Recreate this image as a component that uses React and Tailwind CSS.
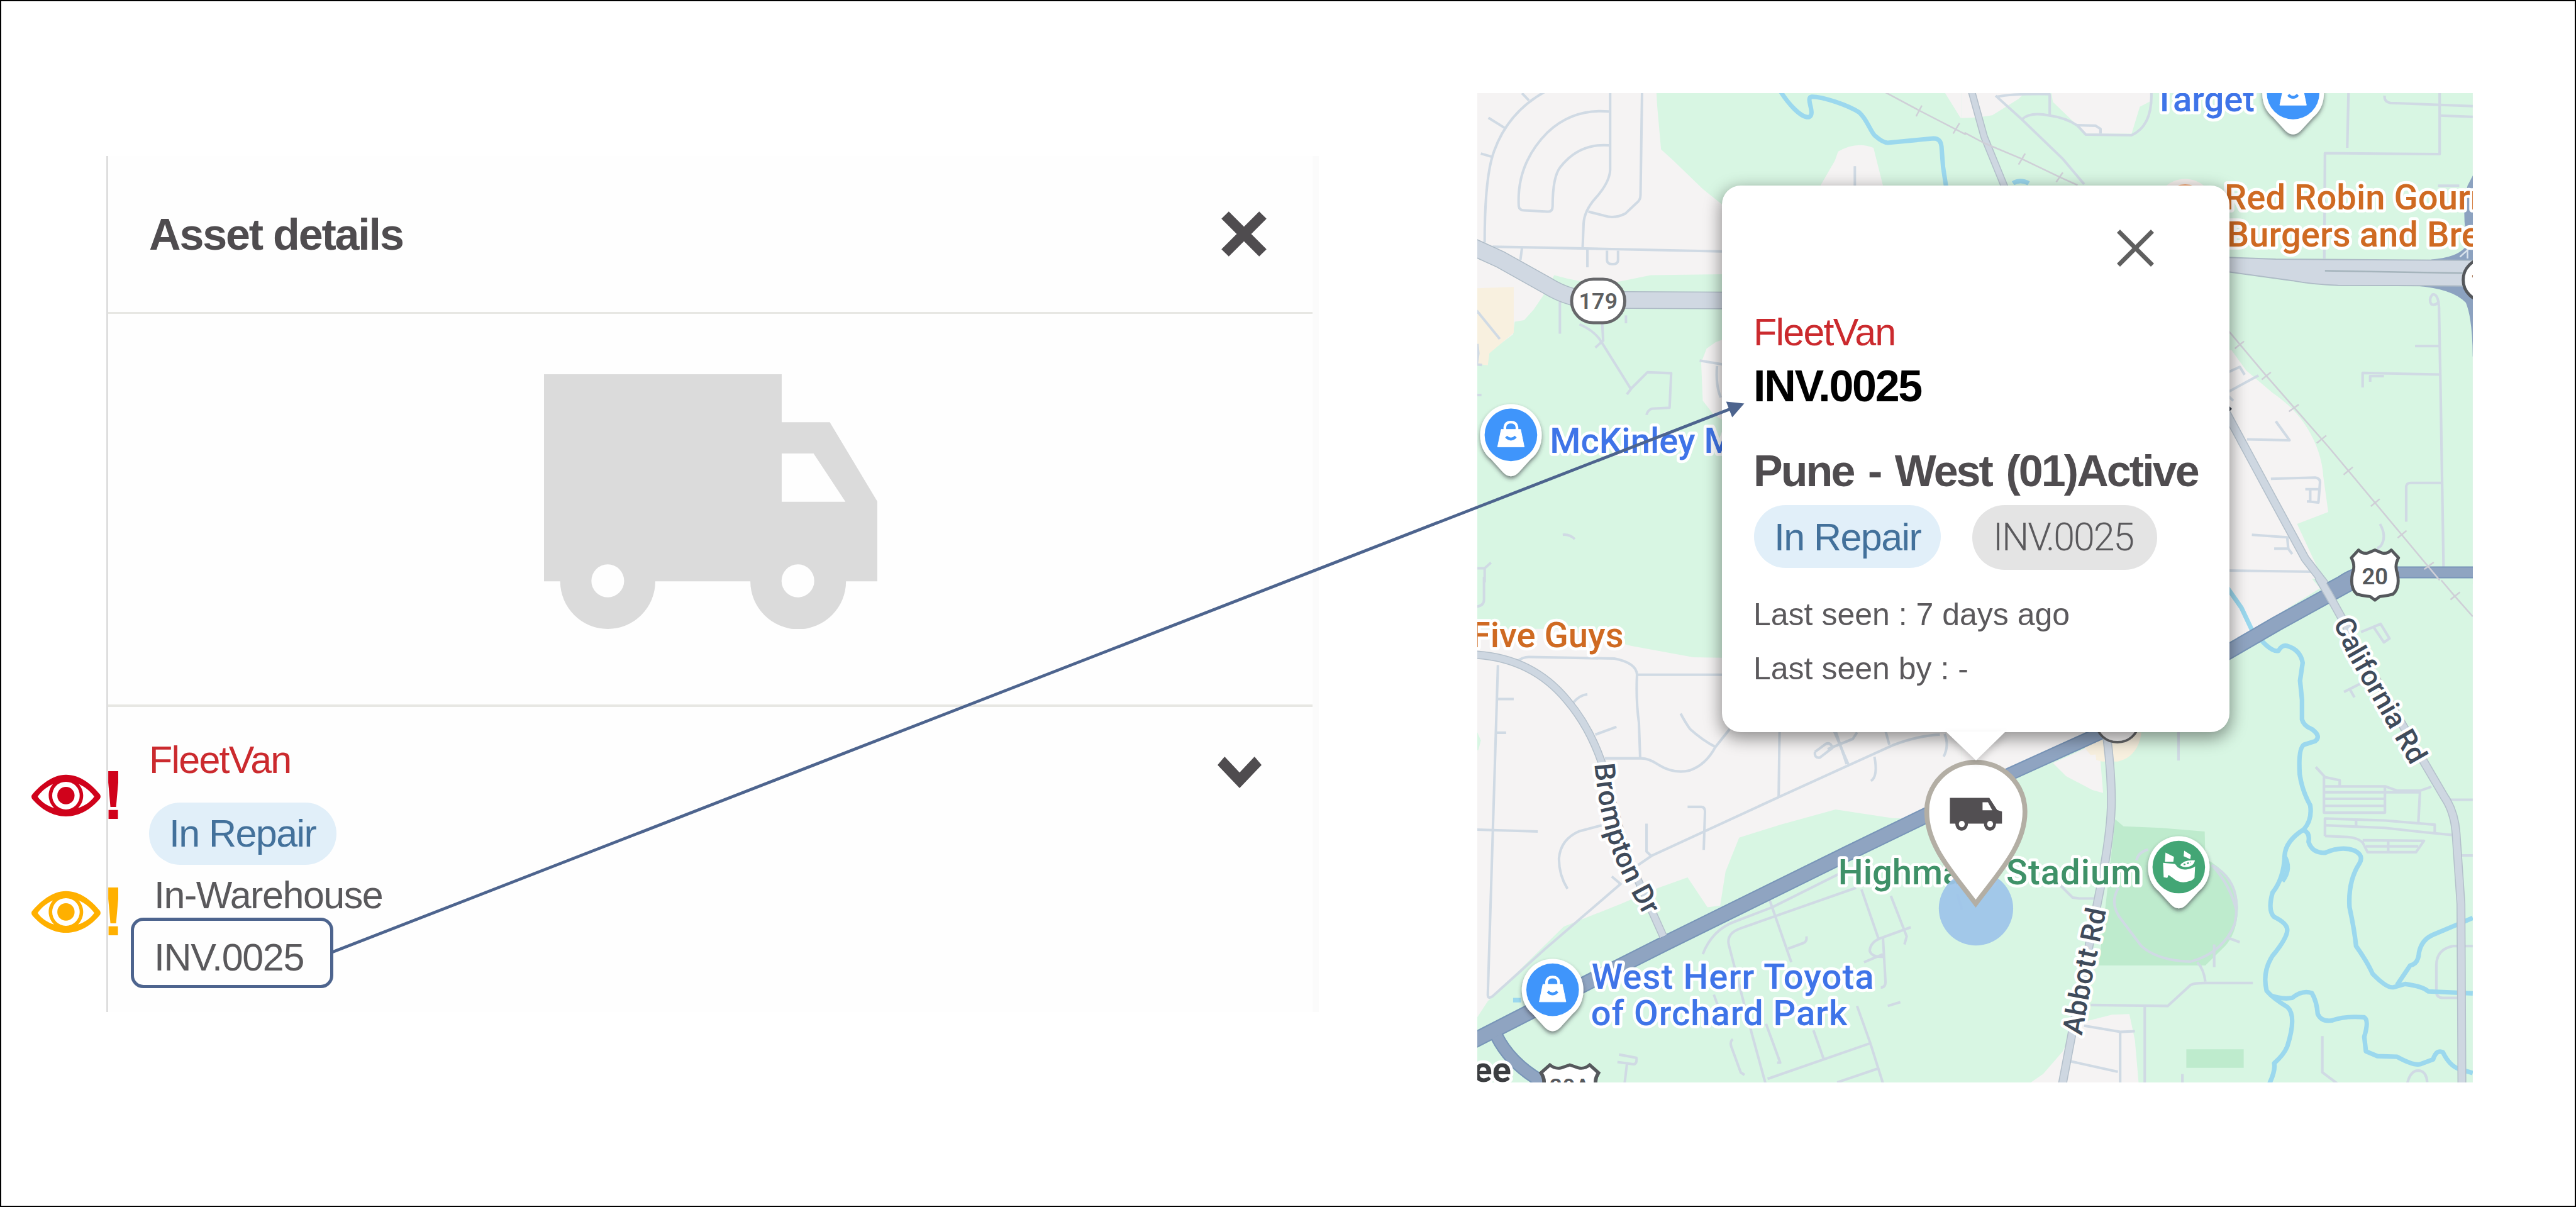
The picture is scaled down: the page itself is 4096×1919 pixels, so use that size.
import React from "react";

const TILES = {
  nw: "translate(2430 140) scale(0.523 0.523)",
  ne: "translate(3250 140) scale(0.5421 0.523)",
  sw: "translate(2430 960) scale(0.523 0.5357)",
  se: "translate(3250 960) scale(0.5421 0.5357)",
};

const LAND = [
  ["nw", "#d8f6e3", "M592 0L596 70L608 205L650 243L740 330L802 380H1600V0Z"],
  ["nw", "#f5f3f3", "M1112 320L1158 240L1168 212Q1225 178 1280 200L1310 320Z"],
  ["nw", "#f5f3f3", "M1490 0L1555 105L1572 105V0Z"],
  ["nw", "#d8f6e3", "M270 603Q400 640 480 622L575 603L802 600H1600V1600H0V900L40 850L60 850L140 790L145 750L175 745L205 712L240 660Z"],
  ["nw", "#f8f0df", "M0 645L142 640V785L65 850L60 888L27 884H0Z"],
  ["nw", "#f5f3f3", "M820 800L780 815L752 835L735 880L740 1000L775 1045L820 1070Z"],
  ["ne", "#d8f6e3", "M-10 0H1551V1580H-10Z"],
  ["ne", "#f5f3f3", "M-10 0H210L165 45L85 97Q40 105 -10 106Z"],
  ["ne", "#f5f3f3", "M260 0L270 55L330 115L370 155H510L535 70L572 50V0Z"],
  ["ne", "#f5f3f3", "M700 840H815L860 905L940 975Q1010 1025 1045 1085Q1090 1160 1095 1240L1110 1352L1015 1390L1100 1580H700Z"],
  ["sw", "#d8f6e3", "M0 -5H1600V240H830L710 238L515 203L300 150L0 150Z"],
  ["sw", "#d8f6e3", "M0 1390L60 1300L300 1070L480 1000L600 950L692 918L755 1010L795 1005L812 900L855 795L985 755L1160 708L1340 735L1600 740V1590H0Z"],
  ["sw", "#d8f6e3", "M0 470H27L38 495L30 525H0Z"],
  ["se", "#d8f6e3", "M-10 -5H1551V1590H-10Z"],
  ["se", "#f5f3f3", "M700 -5H1060L1085 25L870 160L790 200H700Z"],
  ["se", "#f5f3f3", "M-10 460H425L140 590L-10 665Z"],
  ["se", "#f5f3f3", "M270 565L410 500L423 657L390 648L310 605Z"],
  ["se", "#f8f0df", "M365 515L385 540L400 538L402 555L420 560H468Q530 545 540 470H415Z"],
  ["se", "#f5f3f3", "M190 1560L240 1525L300 1455L340 1370L450 1342L503 1340L520 1420L532 1560Z"],
  ["se", "#beebcd", "M460 738L485 760L600 765L733 776L735 860Q830 910 835 1010Q832 1090 795 1130L735 1190H410Z"],
  ["se", "#beebcd", "M677 1449H852V1506H677Z"],
];

const STREETS = {
  nw: [
    "M190 50L168 27", "M245 20Q125 85 80 210Q50 290 50 500", "M115 138L62 105", "M72 228L38 218",
    "M443 85Q330 75 250 150Q150 250 158 385Q160 398 175 398L250 402Q265 402 265 385Q265 290 290 260Q350 185 443 192",
    "M447 20V270Q445 310 400 360Q365 400 363 440L360 515",
    "M548 20L543 350Q543 365 530 375L495 408Q460 425 430 415L378 402",
    "M75 513L300 517L820 528", "M375 520V578", "M437 525V555Q437 568 455 568Q472 568 472 555V525", "M168 518L163 555",
    "M288 680V788", "M350 758Q400 780 420 815L512 962", "M422 757L425 810L400 832",
    "M500 980L515 960L565 910L640 913L635 1022L580 1025Q565 1030 562 1045", "M497 755V730",
    "M730 873L802 885H820", "M785 890Q780 950 797 990", "M25 715L98 805", "M27 820L30 850L25 885L42 887",
    "M297 1424Q320 1422 335 1438", "M27 1530H50L70 1512M50 1530V1575", "M1221 258V320", "M22 982H40",
  ],
  ne: [
    "M95 35L175 110L300 235L365 315", "M175 110Q200 85 260 98V30", "M100 38Q150 28 262 30",
    "M260 98Q310 105 345 130L370 158L510 160Q575 130 570 20", "M340 128L400 130L415 140V155",
    "M1172 20L1168 200", "M1282 35Q1280 55 1300 58L1551 68", "M1450 20V220L1100 217L1098 550", "M1450 98L1551 102",
    "M1445 320H1510", "M1448 703L1452 917L1462 1530", "M1448 703Q1445 660 1428 664Q1415 680 1425 695Q1440 700 1448 685",
    "M1375 827H1448", "M1215 958V912L1452 917", "M1238 940V922H1280", "M1348 1383V1270Q1350 1260 1362 1260H1455",
    "M1268 1390Q1290 1430 1270 1460L1262 1465V1482",
    "M800 912L840 893L855 918", "M800 975L897 920", "M800 980L820 1000",
    "M950 1065L992 1125L862 1122", "M935 1247L1070 1243Q1085 1245 1085 1258L1080 1322L1045 1318M1040 1280H1085M1055 1280V1318",
    "M877 1424L985 1432L988 1468L1000 1485M988 1468H945", "M800 1537L1060 1541",
  ],
  sw: [
    "M48 -10V60Q48 80 22 82", "M150 252Q170 237 190 237L460 242Q530 255 532 292H820M532 290Q528 370 538 440L542 550",
    "M430 550H545Q570 550 600 570Q650 600 700 587Q750 570 780 515L825 460", "M780 515Q740 495 700 460Q685 440 670 412",
    "M330 378Q350 355 375 352", "M400 477L467 453", "M92 262L60 1280Q60 1295 75 1285L240 1140L480 938L452 915",
    "M90 367H142", "M88 471H118", "M20 770L218 776", "M420 757L350 775Q290 800 285 860Q285 910 312 953",
    "M562 752V838L575 850", "M535 880L580 850L980 670L1205 570L1340 510Q1420 480 1490 477", "M983 460L980 670",
    "M692 700H735Q747 700 747 715L743 833", "M1160 465L1195 568", "M1155 465L1200 568",
    "M1095 530L1130 505Q1145 500 1150 518L1110 548Q1092 550 1095 530", "M1135 522L1215 490L1228 470",
    "M1318 465L1330 508", "M1283 545Q1295 605 1272 620", "M1505 475Q1520 510 1502 545",
    "M740 1155Q770 1080 840 1055L960 1010L1175 905", "M1225 950L860 1075Q815 1090 822 1125L895 1400L940 1560",
    "M945 970L1020 1180", "M1010 1138L1060 1120Q1070 1115 1068 1100", "M1242 955L1295 1105",
    "M1335 975L1385 1100L1378 1125", "M1398 1072L1310 1103Q1270 1115 1268 1145Q1275 1165 1310 1163",
    "M1310 1105L1318 1240Q1318 1258 1303 1258", "M1250 1180L1310 1155", "M1325 1315L1365 1303",
    "M1228 1315L1270 1430L1312 1560", "M945 1540L1270 1430", "M1165 1551L1295 1508", "M1090 1390L1122 1478",
    "M940 1370L985 1490H975", "M835 1418Q825 1425 830 1440L860 1520L872 1528", "M775 1280L790 1320",
    "M475 1465L530 1475Q533 1495 520 1495L470 1488M500 1495L492 1560", "M1545 970L1560 1018",
  ],
  se: [
    "M653 460V557", "M1210 160L1270 135L1297 180L1280 192L1250 147", "M1215 316L1158 345M1175 335L1190 362",
    "M1480 678H1551", "M1515 850H1551", "M1072 577L1100 608L1145 618V635M1097 608V718H1283V638",
    "M1100 637H1285L1320 650H1390L1425 638", "M1100 655H1390L1385 748", "M1100 675H1283", "M1100 697H1283",
    "M1100 790V736L1283 742L1435 755V780", "M1100 757L1283 765L1400 778L1500 788", "M1195 742V760",
    "M1100 790L1170 793Q1200 795 1215 810L1230 840H1378L1402 805L1215 803", "M1225 822H1385", "M1293 803V840",
    "M560 832Q530 840 525 865", "M470 950Q440 1000 480 1050L540 1130Q590 1175 690 1178Q790 1150 825 1060Q850 930 755 880",
    "M755 880Q810 940 830 1020", "M710 1180Q730 1200 735 1240", "M385 1312L620 1315L690 1250Q700 1244 735 1244H880",
    "M550 1315V1560", "M762 1125V1195", "M805 1105L840 1118", "M290 940L330 980L350 983H395",
    "M365 1376L475 1395L520 1393M475 1393V1560M315 1484L468 1518", "M665 1525V1560", "M1092 1408V1520L1145 1560",
    "M1350 1560Q1360 1510 1390 1515Q1410 1520 1412 1550",
    "M1551 1130H1490Q1440 1140 1440 1190V1270Q1440 1290 1460 1290H1510",
  ],
};

const WATER = {
  nw: ["M985 20C1010 60 1050 105 1075 103C1100 95 1062 40 1085 38C1120 38 1200 65 1235 88C1260 110 1270 148 1285 162Q1310 184 1325 184L1470 170Q1492 170 1495 195L1500 260L1510 325"],
  ne: ["M148 312Q170 298 196 312"],
  sw: ["M140 1297H165"],
  se: [
    "M800 20L845 85L880 160L920 200Q945 222 958 218Q970 198 985 203Q1025 215 1032 255L1024 310L1030 370V430Q1035 450 1060 460Q1090 482 1070 497L1036 508Q1018 520 1023 600Q1030 650 1055 695Q1062 740 1035 770Q980 805 977 850Q975 920 940 965Q925 1020 945 1040Q985 1060 985 1080Q985 1105 940 1160Q908 1210 922 1268Q940 1290 985 1318Q1015 1345 985 1440Q975 1465 945 1492Q950 1515 928 1560",
    "M975 850Q1000 890 970 930",
    "M1035 772Q1055 780 1050 808Q1060 842 1100 842Q1150 820 1190 835Q1220 850 1205 875Q1170 930 1175 1010Q1190 1080 1195 1130Q1230 1180 1245 1215Q1290 1262 1310 1257L1345 1247Q1400 1255 1415 1270L1551 1276",
    "M1320 1250L1360 1190Q1385 1185 1387 1150Q1395 1110 1430 1095L1500 1065L1551 1043",
    "M935 1283Q970 1295 1000 1290Q1030 1265 1060 1275Q1075 1300 1078 1340Q1090 1365 1120 1360Q1160 1345 1220 1350Q1235 1360 1220 1410L1225 1455L1260 1470L1320 1472Q1370 1500 1390 1495L1430 1480Q1440 1448 1460 1458Q1480 1500 1510 1510L1551 1522",
  ],
};

const RAIL = {
  nw: ["M1300 15L1425 82L1572 158", "M1415 100L1433 66", "M1532 155L1552 122"],
  ne: [
    "M0 152L60 185L175 235L290 292L345 318", "M165 253L185 218", "M280 308L300 278",
    "M800 772L920 920L1110 1145L1450 1568",
    "M825 835L853 812", "M907 933L935 910", "M990 1034L1020 1012", "M1075 1134L1104 1110",
    "M1157 1234L1185 1210", "M1240 1334L1267 1311", "M1322 1434L1349 1411", "M1403 1533L1432 1511",
  ],
  sw: [],
  se: ["M1455 0L1495 48L1551 112", "M1483 60L1512 37"],
};

const GREY_ROADS = [
  ["ne", 20, "M20 15L60 165L125 330"],
  ["ne", 24, "M800 1040L930 1290L1040 1500L1100 1580"],
  ["se", 24, "M1080 -10L1112 45L1230 260L1410 575L1465 670Q1495 715 1500 780L1515 1000L1518 1560"],
  ["se", 24, "M432 465Q450 600 448 700Q445 800 405 1000L330 1390L298 1560"],
  ["sw", 23, "M20 230Q200 240 310 370Q380 450 420 562L500 850L615 1100"],
];

const BLUE_ROADS = [
  ["ne", 34, "M1100 1600L1150 1572Q1190 1543 1225 1543H1560"],
  ["se", 44, "M780 236L950 136L1190 2"],
  ["se", 38, "M-90 706L140 598L430 465L520 420"],
  ["sw", 45, "M1540 682L1200 843L620 1122L330 1265L0 1430"],
  ["sw", 38, "M88 1408Q130 1490 225 1545L260 1570"],
];

function Layer({ paths, stroke, width }) {
  return Object.keys(TILES).map((key) => (
    <g key={key} transform={TILES[key]} fill="none" stroke={stroke} strokeWidth={width} strokeLinejoin="round">
      {paths[key].map((d, i) => (
        <path key={i} d={d} />
      ))}
    </g>
  ));
}

function CasedRoads({ roads, edge, fill, gap }) {
  return (
    <g fill="none">
      {roads.map(([tile, w, d], i) => (
        <path key={"e" + i} transform={TILES[tile]} d={d} stroke={edge} strokeWidth={w + gap} />
      ))}
      {roads.map(([tile, w, d], i) => (
        <path key={"f" + i} transform={TILES[tile]} d={d} stroke={fill} strokeWidth={w - gap} />
      ))}
    </g>
  );
}

function Label({ children, fill = "#3f74e8", size = 58.5, weight = 500, halo = 10, ...rest }) {
  return (
    <text
      fill={fill}
      fontSize={size}
      fontWeight={weight}
      stroke="#ffffff"
      strokeWidth={halo}
      strokeLinejoin="round"
      paintOrder="stroke"
      {...rest}
    >
      {children}
    </text>
  );
}

function Pin({ x, y, color, children }) {
  return (
    <g transform={`translate(${x} ${y})`}>
      <g filter="url(#pinShadow)">
        <path d="M0 -51A51 51 0 0 1 51 0C51 18 44 31 33 40L13 62Q0 75 -13 62L-33 40C-44 31 -51 18 -51 0A51 51 0 0 1 0 -51Z" fill="#fff" />
      </g>
      <circle r="43.5" fill={color} />
      {children}
    </g>
  );
}

function ShoppingPin({ x, y }) {
  return (
    <Pin x={x} y={y} color="#3f95fb">
      <path d="M-10 -8V-13Q-9 -21 0 -21Q9 -21 10 -13V-8" fill="none" stroke="#fff" strokeWidth="4.5" />
      <path d="M-16 -9H16L22 20H-22Z" fill="#fff" stroke="#fff" strokeWidth="1" />
      <path d="M-8 3Q0 11 8 3" fill="none" stroke="#3f95fb" strokeWidth="4.5" />
    </Pin>
  );
}

function Shield({ x, y, children }) {
  return (
    <g transform={`translate(${x} ${y})`}>
      <path
        d="M-27 -44Q-20 -37 -12 -39L0 -44L12 -39Q20 -37 27 -44L39 -31Q32 -18 37 -6Q42 18 30 29Q20 32 8 33L0 39L-8 33Q-20 32 -30 29Q-42 18 -37 -6Q-32 -18 -39 -31Z"
        fill="#fff"
        stroke="#55585c"
        strokeWidth="5"
        strokeLinejoin="round"
      />
      {children}
    </g>
  );
}

function MapCanvas() {
  return (
    <svg className="block h-full w-full font-['Roboto',sans-serif]" viewBox="2444 154 1647 1637" preserveAspectRatio="none">
      <defs>
        <filter id="pinShadow" x="-30%" y="-30%" width="160%" height="170%">
          <feDropShadow dx="0" dy="4" stdDeviation="3.5" floodColor="#30353a" floodOpacity="0.6" />
        </filter>
        <path id="brompton" d="M2638 1264C2643 1325 2654 1372 2668 1410S2704 1486 2732 1538" />
        <path id="california" d="M3860 1030L3884 1085L3996 1280" />
        <path id="abbott" d="M3444 1714L3463 1610L3488 1490" />
      </defs>
      <rect x="2440" y="150" width="1660" height="1650" fill="#f5f3f3" />
      {LAND.map(([tile, fill, d], i) => (
        <path key={i} transform={TILES[tile]} d={d} fill={fill} />
      ))}
      <Layer paths={STREETS} stroke="#d0dae4" width={8} />
      <Layer paths={WATER} stroke="#9bd8ee" width={14} />

      {/* Southwestern Blvd / Route 179 */}
      <g transform={TILES.nw} fill="none">
        <path d="M10 512L100 553L250 637Q320 680 400 681L820 683" stroke="#aebbc6" strokeWidth="56" />
        <path d="M10 512L100 553L250 637Q320 680 400 681L820 683" stroke="#d0d8e2" strokeWidth="50" />
      </g>
      <g transform={TILES.ne}>
        <path d="M1425 553Q1500 548 1528 515V460Q1520 380 1535 320L1560 270V860H1551Q1550 740 1530 690Q1490 645 1375 636Z" fill="#8ca2c0" />
        <path d="M790 546L950 552L1551 556V637L1140 635Q1060 632 1000 620L790 590Z" fill="#d0d8e2" stroke="#aebbc6" strokeWidth="4" />
        <path d="M1100 589L1551 597" stroke="#a5b4bc" strokeWidth="5" />
        <path d="M1512 545L1560 500M1535 550V500" stroke="#d8e2ec" strokeWidth="5" fill="none" />
      </g>

      <CasedRoads roads={BLUE_ROADS} edge="#7895b8" fill="#8fa4c1" gap={4} />
      <CasedRoads roads={GREY_ROADS} edge="#b4c0cb" fill="#ced7e1" gap={3} />
      <Layer paths={RAIL} stroke="#cfcfd7" width={5} />

      {/* Route badges */}
      <rect x="2600" y="462" width="88" height="72" rx="36" fill="#fff" stroke="#66676a" strokeWidth="5" />
      <text x="2644" y="511" fontSize="37" fontWeight="600" fill="#5d5f61" textAnchor="middle" textLength="64">179</text>
      <rect x="4075" y="428" width="90" height="70" rx="35" fill="#fff" stroke="#55585c" strokeWidth="5" />
      <text x="4087" y="478" fontSize="37" fontWeight="600" fill="#5d5f61">179</text>
      <Shield x={3929} y={954}>
        <text y="13" fontSize="38" fontWeight="600" fill="#55585c" textAnchor="middle">20</text>
      </Shield>
      <g transform="translate(2597 1806) scale(1.22 1)">
        <path
          d="M-27 -44Q-20 -37 -12 -39L0 -44L12 -39Q20 -37 27 -44L39 -31Q32 -18 37 -6V10H-37V-6Q-32 -18 -39 -31Z"
          fill="#fff"
          stroke="#55585c"
          strokeWidth="5"
        />
      </g>
      <text x="2597" y="1811" fontSize="37" fontWeight="600" fill="#55585c" textAnchor="middle">20A</text>
      <ellipse cx="3503" cy="1198" rx="34" ry="30" fill="#f5f3f3" stroke="#66676a" strokeWidth="4" />

      {/* Place labels */}
      <Label x="3563" y="184" textLength="167">Target</Label>
      <Label x="2564" y="749.5">McKinley Mall</Label>
      <Label x="3680" y="346.6" fill="#cf6a22">Red Robin Gourmet</Label>
      <Label x="3684" y="407.8" fill="#cf6a22">Burgers and Brews</Label>
      <Label x="2686" y="1070.5" textAnchor="end" fill="#cf6a22">Five Guys</Label>
      <Label x="2633" y="1636" textLength="467">West Herr Toyota</Label>
      <Label x="2632" y="1696.5" textLength="424">of Orchard Park</Label>
      <Label x="3041" y="1463.5" fill="#3f9168">Highmark</Label>
      <Label x="3319" y="1463.5" fill="#3f9168" textLength="224">Stadium</Label>
      <Label x="2500" y="1790" fill="#3b3d40" weight={700} size={58} textAnchor="end">ee</Label>
      <path d="M3680 684L3690 674" stroke="#2f3a46" strokeWidth="7" />

      <Label fill="#3f4b5b" size={47}>
        <textPath href="#brompton" textLength="268">Brompton Dr</textPath>
      </Label>
      <Label fill="#3f4b5b" size={47}>
        <textPath href="#california" textLength="270">California Rd</textPath>
      </Label>
      <Label fill="#3f4b5b" size={47}>
        <textPath href="#abbott" textLength="212">Abbott Rd</textPath>
      </Label>

      <circle cx="3269" cy="1503" r="61.5" fill="#9dc4ea" fillOpacity="0.93" />

      <ShoppingPin x={2499.6} y={719.5} />
      <ShoppingPin x={2568.6} y={1637.6} />
      <ShoppingPin x={3793.6} y={154} />
      <g>
        <circle cx="3615" cy="345" r="49" fill="#f5efec" />
        <circle cx="3615" cy="345" r="40" fill="#f3a06a" />
      </g>
      <Pin x={3604.5} y={1434.6} color="#43a675">
        <path d="M-22 -24L-8 -17L-9 -9L-23 -9ZM9 -27L20 -20L19 -13L8 -18Z" fill="#fff" />
        <path d="M-26 -7L-6 -5Q0 5 12 4Q22 3 27 -1L26 18Q22 23 18 23Q2 29 -10 18L-17 13L-19 18L-25 17Z" fill="#fff" />
        <path d="M1 -3Q8 -14 28 -12Q26 1 11 1Q4 1 1 -3Z" fill="#fff" stroke="#43a675" strokeWidth="2" />
        <path d="M8 -4L20 -8" stroke="#43a675" strokeWidth="2.5" strokeDasharray="3 3" />
      </Pin>
    </svg>
  );
}

function VehicleMarker() {
  return (
    <svg className="absolute left-[706px] top-[1058px] h-[240px] w-[172px]" viewBox="3179 1255 179 249.7">
      <path
        d="M3269 1261A81 81 0 0 1 3350.500 1343C3350.500 1400 3306 1445 3269 1495C3232 1445 3188 1400 3188 1343A81 81 0 0 1 3269 1261Z"
        fill="#fff"
        stroke="#b3aea4"
        strokeWidth="8"
      />
      <g transform="translate(3050 1180) scale(0.4464 0.3333)" fill="#524f52" fillRule="evenodd">
        <path d="M395 420H541L570 480L588 488V548H566C564 595 523 595 521 548H462C460 595 417 595 415 548H395ZM516 442V482H552L536 442Z" />
        <ellipse cx="439" cy="550" rx="11" ry="16" fill="#fff" />
        <ellipse cx="544" cy="550" rx="11" ry="16" fill="#fff" />
      </g>
    </svg>
  );
}

function MapPopup() {
  return (
    <div className="absolute left-[389px] top-[147px] h-[869px] w-[807px] rounded-[30px] bg-white pl-[50px] shadow-[0_8px_26px_3px_rgba(0,0,0,0.4)]">
      <svg
        className="absolute left-[326px] top-[868px] h-[76px] w-[155px] overflow-visible drop-shadow-[0_6px_6px_rgba(0,0,0,0.18)]"
        viewBox="0 0 155 76"
      >
        <path d="M30 0H125L78 46Z" fill="#fff" />
      </svg>
      <div className="flex justify-end pt-[70px] pr-[120px]">
        <svg className="h-[59px] w-[59px]" viewBox="0 0 59 59">
          <path d="M2.500 2.500L56.500 56.500M56.500 2.500L2.500 56.500" stroke="#5f5f5f" strokeWidth="7" />
        </svg>
      </div>
      <p className="mt-[74px] text-[61px] leading-none tracking-[-0.029em] text-[#cb2a2e]">FleetVan</p>
      <p className="mt-[20px] text-[70px] leading-none font-bold tracking-[-0.033em] text-black">INV.0025</p>
      <p className="mt-[65px] text-[70px] leading-none font-bold tracking-[-0.042em] whitespace-nowrap text-[#4f4c4f] [word-spacing:6px]">
        Pune - West (01)Active
      </p>
      <div className="mt-[19px] ml-[1px] flex items-start gap-[50px]">
        <span className="flex h-[100px] w-[297px] items-center rounded-full bg-[#e1eff9] pt-[3px] pl-[32px] text-[61px] leading-none tracking-[-0.026em] whitespace-nowrap text-[#43719b]">
          In Repair
        </span>
        <span className="flex h-[103px] w-[294px] items-center rounded-full bg-[#e4e4e4] pl-[33px] font-['Roboto',sans-serif] text-[61px] leading-none font-light tracking-[-0.036em] text-[#5a595c]">
          INV.0025
        </span>
      </div>
      <p className="mt-[46px] text-[50px] leading-none text-[#5b595c]">Last seen : 7 days ago</p>
      <p className="mt-[36px] text-[50px] leading-none text-[#5b595c]">Last seen by : -</p>
    </div>
  );
}

function WatchAlert({ className }) {
  return (
    <svg className={className} viewBox="117 355 322 207" preserveAspectRatio="none" fill="currentColor">
      <path
        fillRule="evenodd"
        d="M119 458C150 415 195 371 245 371C297 371 340 412 371 456Q376 465 371 474C340 518 297 551 245 551C195 551 150 518 119 474Q115 465 119 458ZM140 465C155 490 175 505 201 515C175 485 175 440 197 411C170 425 155 443 140 465ZM350 465C335 443 318 424 292 411C315 440 315 485 290 515C315 505 335 490 350 465Z"
      />
      <ellipse cx="245" cy="461" rx="51" ry="60" fill="#fff" />
      <ellipse cx="245" cy="461" rx="32" ry="38" />
      <path d="M402 355H439V405L431 510H410L402 405ZM403 523H438V562H403Z" />
    </svg>
  );
}

function AssetPanel() {
  return (
    <section className="mt-[246px] h-[1361px] w-[1928px] shrink-0 border-r-[10px] border-l-[3px] border-r-[#fbfbfb] border-l-[#dedede] bg-[#fefefe]">
      <header className="flex h-[251px] items-center justify-between border-b-[3px] border-[#e7e7e3] pr-[73px] pl-[65px]">
        <h1 className="pt-[2px] text-[70px] leading-none font-bold tracking-[-0.031em] text-[#4f4c4f]">Asset details</h1>
        <svg className="h-[72px] w-[72px]" viewBox="0 0 72 72">
          <path d="M6 6L66 66M66 6L6 66" stroke="#4f4c4f" strokeWidth="16.500" />
        </svg>
      </header>
      <div className="flex h-[625px] items-start justify-center border-b-4 border-[#e7e7e3] pt-[96px]">
        <svg className="h-[405px] w-[530px]" viewBox="112 120 617 733" preserveAspectRatio="none">
          <path
            fill="#dbdbdb"
            fillRule="evenodd"
            d="M112 120H552V258H641L729 486V716H671A88 137 0 0 1 494 716H318A88 137 0 0 1 142 716H112ZM552 348V487H670L611 348ZM230 667A30 47 0 0 0 230 762A30 47 0 0 0 230 667ZM582 667A30 47 0 0 0 582 762A30 47 0 0 0 582 667Z"
          />
        </svg>
      </div>
      <div className="flex items-start justify-between pr-[81px] pl-[65px]">
        <div className="flex flex-col items-start pt-[54px]">
          <p className="text-[61px] leading-none tracking-[-0.029em] text-[#cb2a2e]">FleetVan</p>
          <span className="mt-[37px] flex h-[99px] w-[298px] items-center rounded-full bg-[#e1eff9] pl-[32px] text-[61px] leading-none tracking-[-0.026em] whitespace-nowrap text-[#43719b]">
            In Repair
          </span>
          <p className="mt-[18px] ml-[8px] text-[61px] leading-none tracking-[-0.024em] text-[#5a595c]">In-Warehouse</p>
          <div className="mt-[5px] -ml-[29px] flex h-[112px] w-[322px] items-center rounded-[20px] border-[5px] border-[#4d648e] pt-[15px] pl-[32px]">
            <span className="text-[61px] leading-none tracking-[-0.022em] text-[#5a595c]">INV.0025</span>
          </div>
        </div>
        <svg className="mt-[79px] h-[50px] w-[70px]" viewBox="1360 1225 81 87" preserveAspectRatio="none">
          <path d="M1373 1225L1400.500 1269L1428 1225L1441 1248L1400.500 1312L1360 1248Z" fill="#4f4c4f" />
        </svg>
      </div>
    </section>
  );
}

export default function App() {
  return (
    <main className="relative flex h-[1919px] w-[4096px] items-start overflow-hidden border-2 border-black bg-white font-['Liberation_Sans',Arial,sans-serif]">
      <aside className="relative z-10 flex w-[167px] shrink-0 flex-col gap-[109px] pt-[1224px] pl-[48px]">
        <WatchAlert className="h-[76px] w-[138px] shrink-0 text-[#d0021b]" />
        <WatchAlert className="h-[76px] w-[138px] shrink-0 text-[#ffb000]" />
      </aside>
      <AssetPanel />
      <section className="relative mt-[146px] ml-[252px] h-[1573px] w-[1583px] shrink-0 overflow-hidden">
        <MapCanvas />
        <VehicleMarker />
        <MapPopup />
      </section>
      <svg className="pointer-events-none absolute -top-[2px] -left-[2px] z-20 h-[1919px] w-[4096px]" viewBox="0 0 4262 1997">
        <path d="M549 1575.500L2862 677" stroke="#4d648e" strokeWidth="5" />
        <path d="M2856 664.500L2886 667.500L2866 690.500Z" fill="#4d648e" />
      </svg>
    </main>
  );
}
